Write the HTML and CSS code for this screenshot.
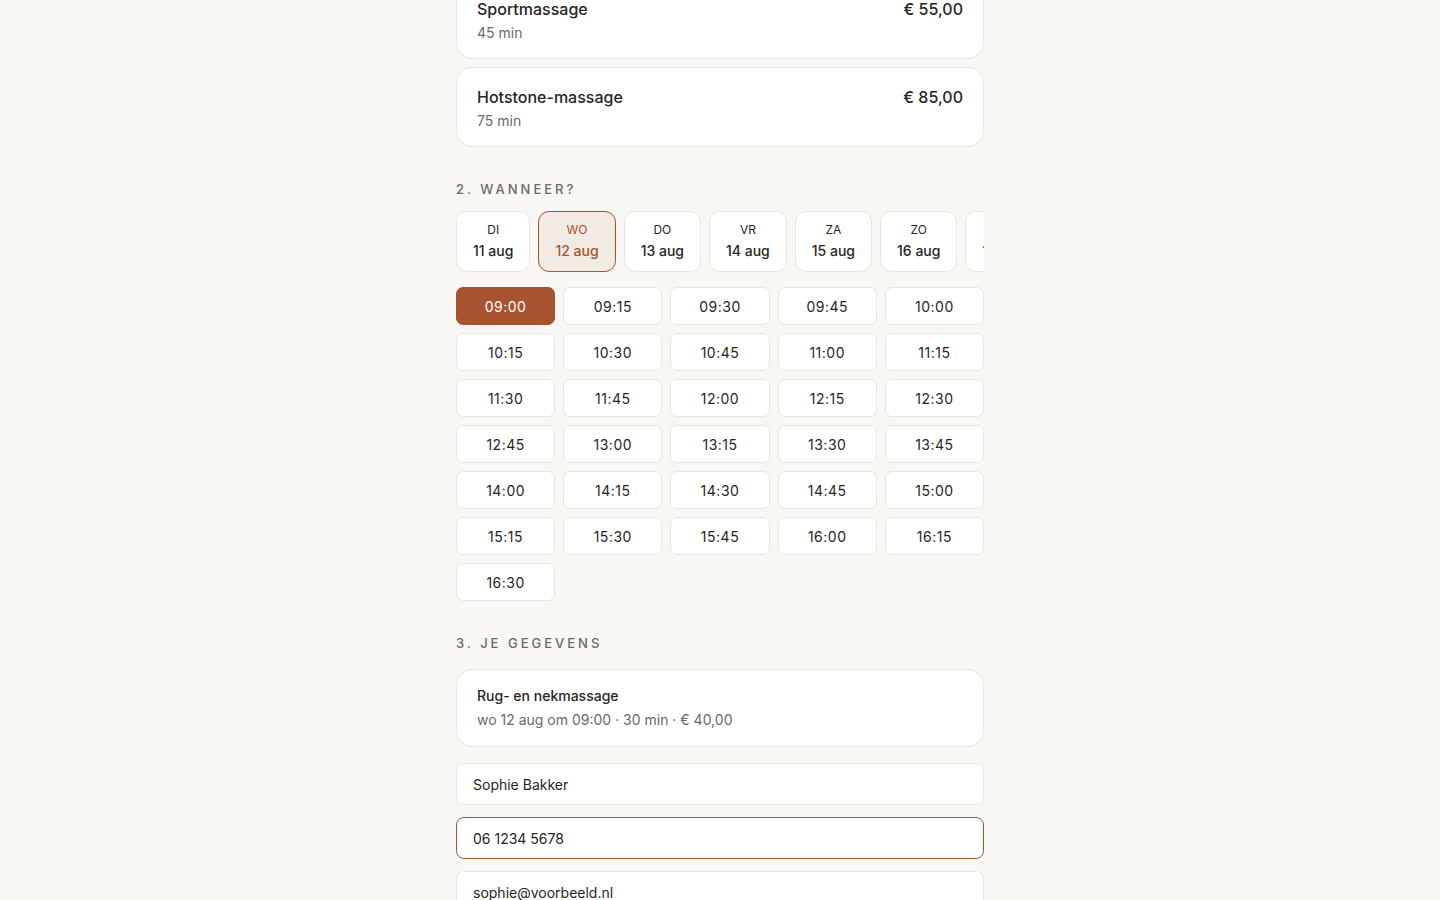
FILE: index.html
```html
<!DOCTYPE html>
<html lang="nl">
<head>
<meta charset="utf-8">
<title>Afspraak maken</title>
<link rel="stylesheet" href="styles.css">
</head>
<body>
<main class="booking">
  <section class="services">
    <div class="service">
      <div class="service-main">
        <div class="service-name">Sportmassage</div>
        <div class="service-dur">45 min</div>
      </div>
      <div class="service-price">€ 55,00</div>
    </div>
    <div class="service">
      <div class="service-main">
        <div class="service-name">Hotstone-massage</div>
        <div class="service-dur">75 min</div>
      </div>
      <div class="service-price">€ 85,00</div>
    </div>
  </section>

  <h2 class="step">2. Wanneer?</h2>
  <div class="days">
    <button class="day"><span class="dow">DI</span><span class="date">11 aug</span></button>
    <button class="day is-selected"><span class="dow">WO</span><span class="date">12 aug</span></button>
    <button class="day"><span class="dow">DO</span><span class="date">13 aug</span></button>
    <button class="day"><span class="dow">VR</span><span class="date">14 aug</span></button>
    <button class="day"><span class="dow">ZA</span><span class="date">15 aug</span></button>
    <button class="day"><span class="dow">ZO</span><span class="date">16 aug</span></button>
    <button class="day"><span class="dow">MA</span><span class="date">17 aug</span></button>
  </div>

  <div class="slots">
    <button class="slot is-selected">09:00</button>
    <button class="slot">09:15</button>
    <button class="slot">09:30</button>
    <button class="slot">09:45</button>
    <button class="slot">10:00</button>
    <button class="slot">10:15</button>
    <button class="slot">10:30</button>
    <button class="slot">10:45</button>
    <button class="slot">11:00</button>
    <button class="slot">11:15</button>
    <button class="slot">11:30</button>
    <button class="slot">11:45</button>
    <button class="slot">12:00</button>
    <button class="slot">12:15</button>
    <button class="slot">12:30</button>
    <button class="slot">12:45</button>
    <button class="slot">13:00</button>
    <button class="slot">13:15</button>
    <button class="slot">13:30</button>
    <button class="slot">13:45</button>
    <button class="slot">14:00</button>
    <button class="slot">14:15</button>
    <button class="slot">14:30</button>
    <button class="slot">14:45</button>
    <button class="slot">15:00</button>
    <button class="slot">15:15</button>
    <button class="slot">15:30</button>
    <button class="slot">15:45</button>
    <button class="slot">16:00</button>
    <button class="slot">16:15</button>
    <button class="slot">16:30</button>
  </div>

  <h2 class="step step-3">3. Je gegevens</h2>
  <div class="summary">
    <div class="summary-title">Rug- en nekmassage</div>
    <div class="summary-sub">wo 12 aug om 09:00 · 30 min · € 40,00</div>
  </div>

  <div class="fields">
    <div class="field">Sophie Bakker</div>
    <div class="field is-focus">06 1234 5678</div>
    <div class="field">sophie@voorbeeld.nl</div>
  </div>
</main>
</body>
</html>
```

FILE: styles.css
```css
* { box-sizing: border-box; }

html, body {
  margin: 0;
  padding: 0;
  background: #f9f7f3;
}

body {
  font-family: Inter, "Noto Sans", sans-serif;
  color: #2a2421;
  overflow: hidden;
  height: 900px;
}

.booking {
  width: 528px;
  margin: -21px auto 0;
}

.services {
  display: flex;
  flex-direction: column;
  gap: 8px;
}

.service {
  display: flex;
  justify-content: space-between;
  align-items: flex-start;
  background: #fff;
  border: 1px solid #ece5dd;
  border-radius: 16px;
  padding: 17px 20px 15px;
}

.service-name,
.service-price {
  font-size: 16px;
  line-height: 24px;
  font-weight: 450;
  color: #2a2421;
}

.service-dur {
  font-size: 14px;
  line-height: 20px;
  margin-top: 2px;
  color: #6f6863;
}

.step {
  margin: 32px 0 12px;
  font-size: 13px;
  line-height: 20px;
  font-weight: 500;
  letter-spacing: 3px;
  text-transform: uppercase;
  color: #6f6863;
}

.step-3 { margin-bottom: 16px; }

.days {
  display: flex;
  gap: 8px;
  overflow: hidden;
}

.day {
  flex: none;
  display: flex;
  flex-direction: column;
  align-items: center;
  gap: 2px;
  padding: 9px 16px 10px;
  background: #fff;
  border: 1px solid #ece5dd;
  border-radius: 11px;
  font-family: inherit;
  color: #2a2421;
  cursor: pointer;
}

.dow {
  font-size: 12px;
  line-height: 18px;
  font-weight: 400;
}

.date {
  font-size: 14px;
  line-height: 20px;
  font-weight: 450;
}

.day.is-selected {
  background: #f2ebe4;
  border-color: #a8532f;
  color: #a8532f;
}

.slots {
  margin-top: 15px;
  display: grid;
  grid-template-columns: repeat(5, 1fr);
  gap: 8px;
}

.slot {
  height: 38px;
  background: #fff;
  border: 1px solid #ece5dd;
  border-radius: 7px;
  font-family: inherit;
  font-size: 14px;
  letter-spacing: 0.5px;
  color: #2a2421;
  cursor: pointer;
}

.slot.is-selected {
  background: #a8532f;
  border-color: #a8532f;
  color: #fff;
}

.summary {
  background: #fff;
  border: 1px solid #ece5dd;
  border-radius: 16px;
  padding: 16px 20px;
}

.summary-title {
  font-size: 14px;
  line-height: 20px;
  font-weight: 450;
  color: #2a2421;
}

.summary-sub {
  margin-top: 4px;
  font-size: 14px;
  line-height: 20px;
  color: #6f6863;
}

.fields {
  margin-top: 16px;
  display: flex;
  flex-direction: column;
  gap: 12px;
}

.field {
  height: 42px;
  display: flex;
  align-items: center;
  padding: 0 16px;
  background: #fff;
  border: 1px solid #ece5dd;
  border-radius: 8px;
  font-size: 14px;
  color: #2a2421;
}

.field.is-focus {
  border-color: #a8532f;
}
```
